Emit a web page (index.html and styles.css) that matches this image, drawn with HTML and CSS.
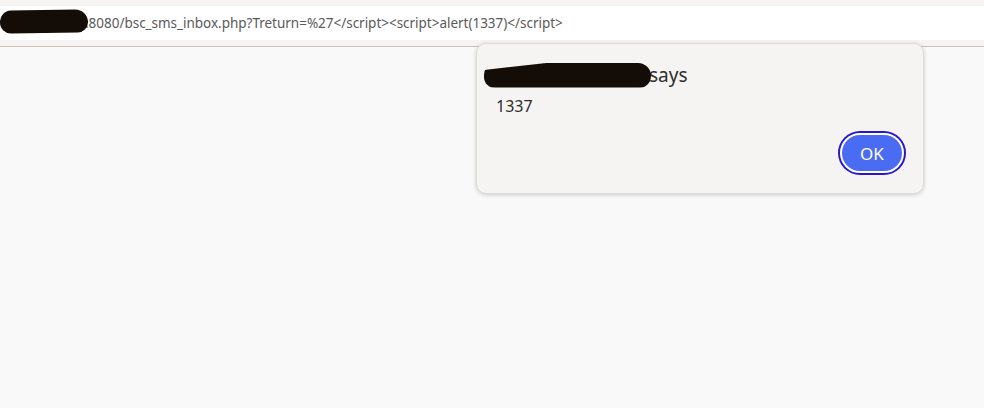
FILE: index.html
```html
<!DOCTYPE html>
<html>
<head>
<meta charset="utf-8">
<link rel="stylesheet" href="styles.css">
</head>
<body>
<div class="chrome">
  <div class="urlbar">
    <span class="redact redact-url"></span>
    <span class="url">:8080/bsc_sms_inbox.php?Treturn=%27&lt;/script&gt;&lt;script&gt;alert(1337)&lt;/script&gt;</span>
  </div>
</div>
<div class="page">
  <div class="dialog">
    <div class="title"><span class="redact redact-title"></span><span class="says">says</span></div>
    <div class="message">1337</div>
    <div class="actions">
      <button class="ok">OK</button>
    </div>
  </div>
</div>
</body>
</html>
```
FILE: styles.css
```css
html, body {
  margin: 0;
  padding: 0;
  height: 100%;
}
body {
  background: #f9f9f9;
  font-family: "Noto Sans", "Open Sans", sans-serif;
  overflow: hidden;
}
.chrome {
  background: #f5f4f3;
  padding: 6px 0 6px 0;
  border-bottom: 1px solid #cfc1b9;
}
.urlbar {
  position: relative;
  background: #ffffff;
  height: 34px;
  display: flex;
  align-items: center;
  overflow: hidden;
}
.url {
  font-size: 13.5px;
  color: #5a5a5a;
  white-space: nowrap;
  margin-left: 85px;
  letter-spacing: -0.02px;
}
.redact {
  background: #130c07;
  display: block;
}
.redact-url {
  position: absolute;
  left: 0;
  top: 4px;
  width: 88px;
  height: 23px;
  border-radius: 12px 14px 11px 12px;
  transform: rotate(-1deg);
  z-index: 1;
}
.page {
  position: relative;
  height: calc(100% - 47px);
}
.dialog {
  position: absolute;
  left: 476px;
  top: -4px;
  width: 448px;
  height: 151px;
  box-sizing: border-box;
  background: #f5f4f2;
  border: 1px solid #dddbd8;
  border-radius: 10px;
  box-shadow: 0 1px 4px rgba(0,0,0,0.18);
  padding: 18px 19px 0 7px;
}
.title {
  display: flex;
  align-items: center;
  font-size: 19px;
  color: #2e2e2e;
  line-height: 26px;
  height: 26px;
  white-space: nowrap;
}
.redact-title {
  width: 167px;
  height: 25px;
  margin-right: -2px;
  border-radius: 13px 14px 13px 12px;
  clip-path: polygon(0 30%, 40% 0, 100% 0, 100% 100%, 45% 100%, 0 100%);
}
.says {
  margin-top: -1px;
}
.message {
  font-size: 16px;
  color: #2e2e2e;
  margin-top: 8px;
  margin-left: 12px;
  line-height: 20px;
}
.actions {
  display: flex;
  justify-content: flex-end;
  margin-top: 15px;
  margin-right: -2px;
}
.ok {
  width: 64px;
  height: 40px;
  box-sizing: border-box;
  border-radius: 20px;
  background: #4a6cf3;
  border: 2px solid #ffffff;
  box-shadow: 0 0 0 2px #2a16d0;
  color: #ffffff;
  font-family: "Noto Sans", "Open Sans", sans-serif;
  font-size: 17px;
  padding: 0;
  margin: 2px;
}
```
